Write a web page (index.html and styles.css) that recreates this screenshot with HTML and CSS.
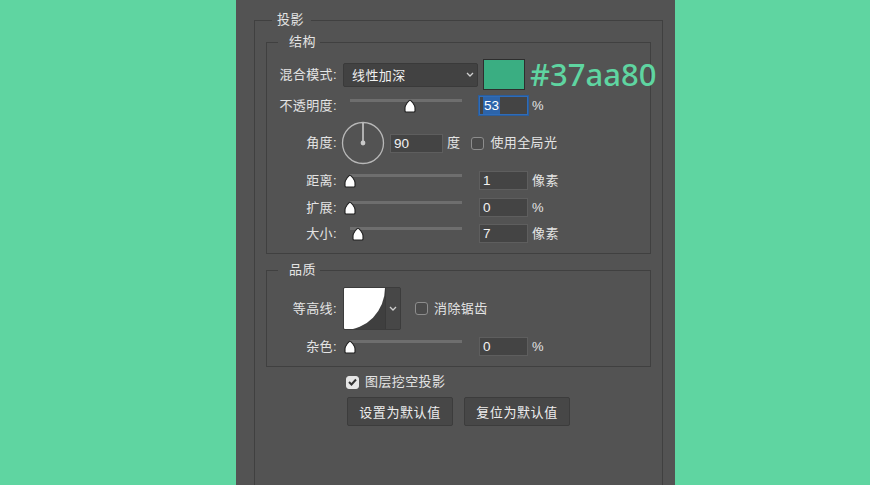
FILE: index.html
```html
<!DOCTYPE html>
<html lang="zh-CN">
<head>
    <meta charset="UTF-8">
    <meta name="viewport" content="width=device-width, initial-scale=1">
    <title>投影</title>
    <link rel="stylesheet" href="styles.css">
</head>
<body>
    <div class="panel">
        <fieldset class="group outer">
            <legend class="legend_outer">投影</legend>

            <fieldset class="group struct">
                <legend class="legend_sub">结构</legend>
                <div class="row row_blend">
                    <span class="label">混合模式:</span>
                    <div class="select">
                        <span>线性加深</span>
                        <svg class="chevron" width="8" height="5" viewBox="0 0 8 5"><polyline points="1,1 4,4 7,1" fill="none" stroke="#cfcfcf" stroke-width="1.3"/></svg>
                    </div>
                    <div class="swatch"></div>
                    <span class="hex">#37aa80</span>
                </div>
                <div class="row row_slider r_opacity">
                    <span class="label">不透明度:</span>
                    <div class="slider"><span class="thumb" style="left: 54%"></span></div>
                    <div class="input input_focus"><span class="selected">53</span></div>
                    <span class="unit">%</span>
                </div>
                <div class="row row_angle">
                    <span class="label">角度:</span>
                    <svg class="dial" width="44" height="44" viewBox="0 0 44 44">
                        <circle cx="22" cy="22" r="20.5" fill="none" stroke="#b8b8b8" stroke-width="1.3"/>
                        <line x1="22" y1="22" x2="22" y2="2" stroke="#c9c9c9" stroke-width="1.6"/>
                        <circle cx="22" cy="22" r="2.4" fill="#c9c9c9"/>
                    </svg>
                    <div class="input input_angle">90</div>
                    <span class="unit">度</span>
                    <span class="check"></span>
                    <span class="check_text">使用全局光</span>
                </div>
                <div class="row row_slider r_dist">
                    <span class="label">距离:</span>
                    <div class="slider"><span class="thumb" style="left: 0%"></span></div>
                    <div class="input">1</div>
                    <span class="unit">像素</span>
                </div>
                <div class="row row_slider r_spread">
                    <span class="label">扩展:</span>
                    <div class="slider"><span class="thumb" style="left: 0%"></span></div>
                    <div class="input">0</div>
                    <span class="unit">%</span>
                </div>
                <div class="row row_slider r_size">
                    <span class="label">大小:</span>
                    <div class="slider"><span class="thumb" style="left: 7%"></span></div>
                    <div class="input">7</div>
                    <span class="unit">像素</span>
                </div>
            </fieldset>

            <fieldset class="group quality">
                <legend class="legend_sub">品质</legend>
                <div class="row row_contour">
                    <span class="label">等高线:</span>
                    <div class="contour">
                        <svg class="contour_preview" width="41" height="42" viewBox="0 0 41 42">
                            <path d="M0 0 H41 A41 42 0 0 1 0 42 Z" fill="#fff"/>
                        </svg>
                        <div class="contour_drop">
                            <svg width="8" height="5" viewBox="0 0 8 5"><polyline points="1,1 4,4 7,1" fill="none" stroke="#cfcfcf" stroke-width="1.3"/></svg>
                        </div>
                    </div>
                    <span class="check check_aa"></span>
                    <span class="check_text">消除锯齿</span>
                </div>
                <div class="row row_slider r_noise">
                    <span class="label">杂色:</span>
                    <div class="slider"><span class="thumb" style="left: 0%"></span></div>
                    <div class="input">0</div>
                    <span class="unit">%</span>
                </div>
            </fieldset>

            <div class="knockout">
                <span class="check checked">
                    <svg width="9" height="8" viewBox="0 0 9 8"><polyline points="1,4 3.5,6.5 8,1.5" fill="none" stroke="#333" stroke-width="2"/></svg>
                </span>
                <span class="check_text">图层挖空投影</span>
            </div>

            <div class="buttons">
                <button type="button" class="button">设置为默认值</button>
                <button type="button" class="button">复位为默认值</button>
            </div>
        </fieldset>
    </div>
</body>
</html>
```

FILE: styles.css
```css
body {
    margin: 0;
    background: #5fd5a1;
    overflow: hidden;
    font-family: "Liberation Sans", "Noto Sans CJK SC", sans-serif;
    font-size: 13px;
    color: #e4e4e4;
}

.panel {
    width: 439px;
    height: 485px;
    margin-left: 236px;
    padding: 12px 12px 0 18px;
    box-sizing: border-box;
    background: #535353;
    overflow: hidden;
}

.group {
    margin: 0;
    border: 1px solid #404040;
    min-width: 0;
}

.outer {
    height: 520px;
    padding: 6px 11px 0 11px;
    box-sizing: border-box;
}

.legend_outer {
    margin-left: 6px;
    padding: 0 7px 0 5px;
    line-height: 16px;
    letter-spacing: 0.4px;
}

.legend_sub {
    margin-left: 11px;
    padding: 0 4px 0 11px;
    line-height: 16px;
    letter-spacing: 0.4px;
}

.struct {
    padding: 9px 0 10px 0;
}

.quality {
    margin-top: 8px;
    padding: 9px 0 10px 0;
}

.row {
    display: flex;
    align-items: center;
    white-space: nowrap;
}

.row > * {
    flex: none;
}

.label {
    width: 70px;
    text-align: right;
    letter-spacing: 0.4px;
    line-height: 16px;
}

/* 混合模式 */
.row_blend {
    height: 31px;
}

.select {
    display: flex;
    align-items: center;
    justify-content: space-between;
    width: 135px;
    height: 24px;
    margin-left: 6px;
    padding: 0 3px 0 8px;
    box-sizing: border-box;
    background: #424242;
    border: 1px solid #3a3a3a;
    border-radius: 2px;
    color: #f0f0f0;
    letter-spacing: 0.4px;
}

.swatch {
    width: 42px;
    height: 31px;
    margin-left: 5px;
    box-sizing: border-box;
    border: 1px solid #2e2e2e;
    background: #3aae82;
}

.hex {
    margin-left: 5px;
    font-family: "Noto Sans", sans-serif;
    font-size: 31px;
    font-weight: 500;
    line-height: 31px;
    color: #5fd5a1;
}

/* sliders */
.row_slider {
    height: 19px;
}

.r_opacity {
    margin-top: 6px;
}

.r_dist {
    margin-top: 6px;
}

.r_spread {
    margin-top: 8px;
}

.r_size {
    margin-top: 7px;
}

.r_noise {
    margin-top: 7px;
}

.slider {
    position: relative;
    width: 112px;
    height: 19px;
    margin-left: 13px;
}

.slider::before {
    position: absolute;
    top: 3px;
    left: 0;
    right: 0;
    height: 3px;
    background: #6e6e6e;
    content: '';
}

.thumb {
    position: absolute;
    top: 3px;
    width: 12px;
    height: 14px;
    margin-left: -6px;
    background: no-repeat center / 12px 14px url("data:image/svg+xml,%3Csvg xmlns='http://www.w3.org/2000/svg' width='12' height='14' viewBox='0 0 12 14'%3E%3Cpath d='M6 1.2 C7.2 1.2 11 6.2 11 8.8 V12 Q11 13 10 13 H2 Q1 13 1 12 V8.8 C1 6.2 4.8 1.2 6 1.2 Z' fill='%23fff' stroke='%23202020' stroke-width='1.1'/%3E%3C/svg%3E");
}

.input {
    width: 49px;
    height: 19px;
    margin-left: 17px;
    padding-left: 3px;
    box-sizing: border-box;
    background: #444;
    border: 1px solid #5e5e5e;
    color: #f2f2f2;
    font-size: 13.5px;
    line-height: 17px;
}

.input_focus {
    border-color: #2f6cb8;
    box-shadow: 0 0 0 1px #2a5d9c;
}

.selected {
    display: inline-block;
    padding: 0 1px;
    background: #2c64aa;
    color: #fff;
}

.unit {
    margin-left: 4px;
    letter-spacing: 0.4px;
    line-height: 16px;
}

/* 角度 */
.row_angle {
    height: 44px;
    margin-top: 6px;
}

.dial {
    margin-left: 4px;
}

.input_angle {
    width: 53px;
    margin-left: 5px;
}

.check {
    display: inline-flex;
    align-items: center;
    justify-content: center;
    width: 13px;
    height: 13px;
    margin-left: 11px;
    box-sizing: border-box;
    border: 1px solid #8d8d8d;
    border-radius: 3px;
    background: #4b4b4b;
}

.check_text {
    margin-left: 6px;
    letter-spacing: 0.4px;
    line-height: 16px;
}

/* 等高线 */
.row_contour {
    height: 43px;
}

.contour {
    display: flex;
    height: 43px;
    margin-left: 6px;
    box-sizing: border-box;
    border: 1px solid #3c3c3c;
    border-radius: 2px;
    background: #444;
    overflow: hidden;
}

.contour_preview {
    display: block;
    background: #3f3f3f;
}

.contour_drop {
    display: flex;
    align-items: center;
    justify-content: center;
    width: 14px;
    border-left: 1px solid #3a3a3a;
    background: #474747;
}

.check_aa {
    margin-left: 14px;
}

/* 图层挖空投影 */
.knockout {
    display: flex;
    align-items: center;
    height: 16px;
    margin-top: 7px;
    padding-left: 80px;
}

.knockout .check {
    margin-left: 0;
}

.checked {
    border-color: #e6e6e6;
    background: #e6e6e6;
}

.buttons {
    display: flex;
    gap: 11px;
    margin-top: 7px;
    padding-left: 81px;
}

.button {
    width: 106px;
    height: 29px;
    padding: 0;
    border: 1px solid #3c3c3c;
    border-radius: 2px;
    background: #474747;
    color: #ededed;
    font-family: "Liberation Sans", "Noto Sans CJK SC", sans-serif;
    font-size: 13px;
    letter-spacing: 0.6px;
    cursor: pointer;
}
```
